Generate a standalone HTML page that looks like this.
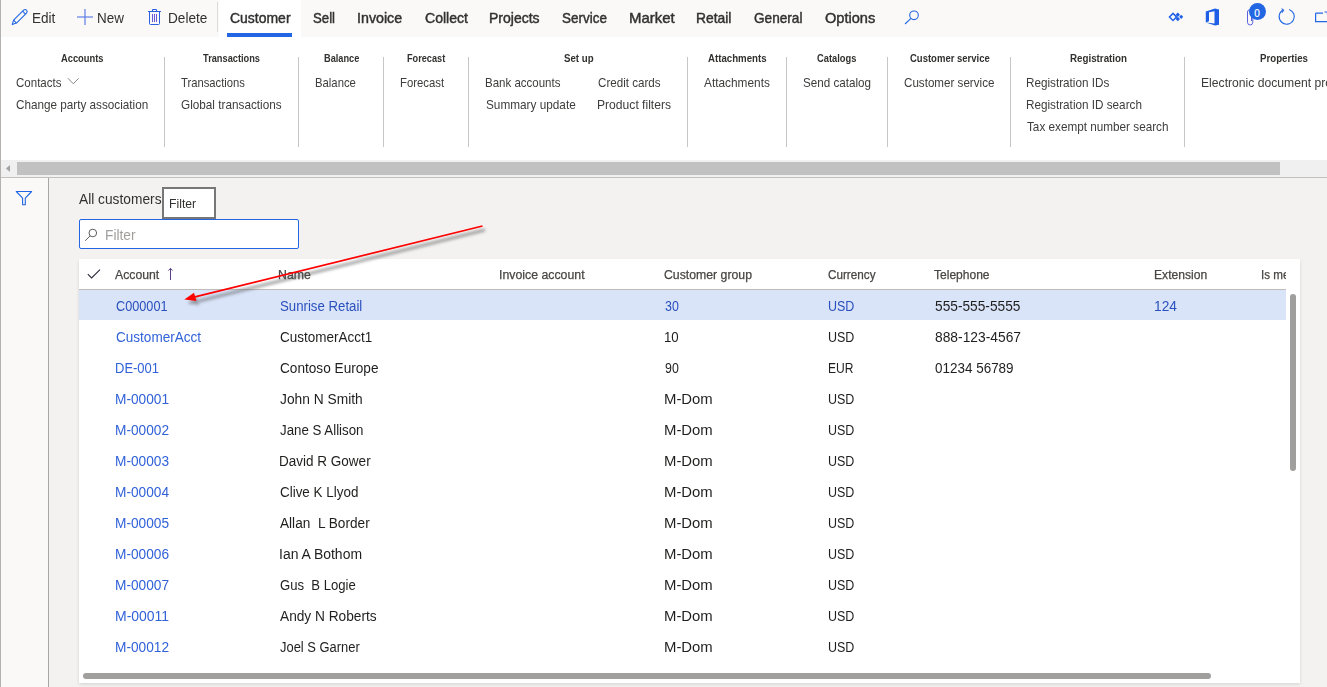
<!DOCTYPE html>
<html><head><meta charset="utf-8">
<style>
html,body{margin:0;padding:0}
body{width:1327px;height:687px;overflow:hidden;position:relative;background:#f3f2f1;font-family:"Liberation Sans",sans-serif}
.b{position:absolute}
.t{position:absolute;white-space:pre;line-height:20px;font-family:"Liberation Sans",sans-serif}
svg{position:absolute;overflow:visible}
</style></head><body>
<!-- toolbar -->
<div class="b" style="left:0;top:0;width:1327px;height:37px;background:#faf9f8"></div>
<div class="b" style="left:219px;top:0;width:82px;height:37px;background:#fff"></div>
<div class="b" style="left:227px;top:33px;width:65px;height:4px;background:#2266e3"></div>
<div class="b" style="left:217px;top:2px;width:1px;height:30px;background:#dedcda"></div>
<!-- ribbon -->
<div class="b" style="left:0;top:37px;width:1327px;height:123px;background:#fff"></div>
<div class="b" style="left:164px;top:57px;width:1px;height:90px;background:#c8c6c4"></div>
<div class="b" style="left:298px;top:57px;width:1px;height:90px;background:#c8c6c4"></div>
<div class="b" style="left:383px;top:57px;width:1px;height:90px;background:#c8c6c4"></div>
<div class="b" style="left:468px;top:57px;width:1px;height:90px;background:#c8c6c4"></div>
<div class="b" style="left:687px;top:57px;width:1px;height:90px;background:#c8c6c4"></div>
<div class="b" style="left:786px;top:57px;width:1px;height:90px;background:#c8c6c4"></div>
<div class="b" style="left:887px;top:57px;width:1px;height:90px;background:#c8c6c4"></div>
<div class="b" style="left:1010px;top:57px;width:1px;height:90px;background:#c8c6c4"></div>
<div class="b" style="left:1184px;top:57px;width:1px;height:90px;background:#c8c6c4"></div>
<!-- ribbon scrollbar -->
<div class="b" style="left:0;top:160px;width:1327px;height:17px;background:#f0f0f0"></div>
<div class="b" style="left:17px;top:162px;width:1263px;height:13px;background:#c1c1c1"></div>
<svg style="left:0;top:160px" width="17" height="17"><path d="M10 5 L10 12 L6 8.5 Z" fill="#a3a3a3"/></svg>
<div class="b" style="left:0;top:177px;width:1327px;height:1px;background:#c3bfbb"></div>
<!-- left nav -->
<div class="b" style="left:0;top:178px;width:48px;height:509px;background:#faf9f8"></div>
<div class="b" style="left:48px;top:178px;width:1px;height:509px;background:#a8a6a4"></div>
<div class="b" style="left:0;top:0;width:1px;height:687px;background:#b3b0ad"></div>
<!-- tooltip + filter -->
<div class="b" style="left:162px;top:187px;width:50px;height:28px;border:2px solid #777;background:#fff"></div>
<div class="b" style="left:79px;top:219px;width:218px;height:28px;border:1px solid #2266e3;border-radius:2px;background:#fff"></div>
<!-- grid -->
<div class="b" style="left:79px;top:259px;width:1221px;height:424px;background:#fff;box-shadow:0 1.6px 3.6px rgba(0,0,0,.12),0 .3px .9px rgba(0,0,0,.1)"></div>
<div class="b" style="left:79px;top:289px;width:1207px;height:1px;background:#bfbbb8"></div>
<div class="b" style="left:79px;top:290px;width:1207px;height:30px;background:#d9e4f9"></div>
<div class="b" style="left:1290px;top:294px;width:6px;height:177px;border-radius:3px;background:#a09f9e"></div>
<div class="b" style="left:83px;top:673px;width:1128px;height:6px;border-radius:3px;background:#a09f9e"></div>
<!-- icons -->
<!--ICONS-->
<!-- pencil -->
<svg style="left:11px;top:8px" width="18" height="18" viewBox="0 0 18 18"><g fill="none" stroke="#2266e3" stroke-width="1.1" stroke-linejoin="round"><path d="M1.2 16.6 L2.6 12.2 L12.6 2.2 Q14.1 0.8 15.5 2.2 Q16.9 3.7 15.5 5.1 L5.5 15.1 Z"/><path d="M2.6 12.2 L5.5 15.1"/><path d="M11.6 3.2 L14.5 6.1"/></g></svg>
<!-- plus -->
<svg style="left:77px;top:9px" width="16" height="16" viewBox="0 0 16 16"><g stroke="#5f7fe6" stroke-width="1.2"><path d="M8 0 V16"/><path d="M0 8 H16"/></g></svg>
<!-- trash -->
<svg style="left:147px;top:8px" width="16" height="18" viewBox="0 0 16 18"><g fill="none" stroke="#2a5fe0" stroke-width="1"><path d="M1 3.5 H14"/><path d="M5.5 3.5 V1.5 H9.5 V3.5"/><path d="M2.5 3.5 V15.5 Q2.5 16.5 3.5 16.5 H11.5 Q12.5 16.5 12.5 15.5 V3.5"/><path d="M5.5 6 V14 M7.5 6 V14 M9.5 6 V14" stroke="#6a5ad8"/></g></svg>
<!-- search tab -->
<svg style="left:904px;top:10px" width="16" height="15" viewBox="0 0 16 15"><g fill="none" stroke="#2266e3" stroke-width="1.1"><circle cx="10" cy="5.3" r="4.3"/><path d="M7 8.4 L1 14"/></g></svg>
<!-- power apps diamonds -->
<svg style="left:1168px;top:12px" width="16" height="10" viewBox="0 0 16 10"><g fill="#1f5fe6"><path d="M5 0.3 L9.6 4.9 L5 9.5 L0.4 4.9 Z M5 2.4 L2.5 4.9 L5 7.4 L7.5 4.9 Z" fill-rule="evenodd"/><path d="M9.8 0.6 L12 2.8 L9.8 5 L7.6 2.8 Z"/><path d="M13.2 2.7 L15.2 4.8 L13.2 6.9 L11.2 4.8 Z"/><path d="M9.8 4.8 L12 7 L9.8 9.2 L7.6 7 Z"/></g></svg>
<!-- office -->
<svg style="left:1205px;top:8px" width="15" height="18" viewBox="0 0 15 18"><path fill="#1f5fe6" d="M0.8 3.4 L10 0.6 L14 1.4 L14 16.8 L10 17.4 L0.8 14.6 L9.5 15.5 L9.5 3.3 L4 4.3 L4 13.2 L0.8 14.6 Z"/></svg>
<!-- paperclip -->
<svg style="left:1246px;top:9px" width="9" height="17" viewBox="0 0 9 17"><path fill="none" stroke="#5b62dc" stroke-width="1" d="M6.8 4 V13.2 Q6.8 16 4.2 16 Q1.5 16 1.5 13.2 V3 Q1.5 0.8 3.5 0.8 Q5.5 0.8 5.5 3 V12"/></svg>
<div class="b" style="left:1249px;top:3px;width:17px;height:17px;border-radius:50%;background:#2266e3"></div>
<span class="t" style="left:1254.3px;top:4px;font-size:10px;font-weight:normal;-webkit-text-stroke:0.2px #fff;color:#fff">0</span>
<!-- refresh -->
<svg style="left:1278px;top:8px" width="18" height="18" viewBox="0 0 18 18"><g fill="none" stroke="#2266e3" stroke-width="1.1"><path d="M11.2 1.4 A7.6 7.6 0 1 1 4.6 2.2"/><path d="M3.6 0.6 L5.6 2.1 L3.9 4.6"/></g></svg>
<!-- open in new -->
<svg style="left:1315px;top:11px" width="14" height="13" viewBox="0 0 14 13"><g fill="none" stroke="#2266e3" stroke-width="1.2"><path d="M0.6 2.2 H8 M0.6 2.2 V10.6 H14"/><path d="M9.5 1 L12.5 1 L12.5 4"/></g></svg>
<!-- nav filter -->
<svg style="left:15px;top:190px" width="18" height="16" viewBox="0 0 18 16"><path fill="none" stroke="#2266e3" stroke-width="1.1" stroke-linejoin="round" d="M1.3 1.5 H16.6 L10.3 8.2 V14.8 H7.6 V8.2 Z"/></svg>
<!-- filter input search -->
<svg style="left:84px;top:228px" width="14" height="14" viewBox="0 0 14 14"><g fill="none" stroke="#605e5c" stroke-width="1"><circle cx="8.8" cy="5" r="3.8"/><path d="M6.1 7.8 L1.2 12.8"/></g></svg>
<!-- header checkmark -->
<svg style="left:86px;top:268px" width="16" height="12" viewBox="0 0 16 12"><path fill="none" stroke="#2b2a3a" stroke-width="1.1" d="M1.8 6.2 L5.6 10 L14 1.6"/></svg>
<!-- sort arrow -->
<svg style="left:166px;top:267px" width="9" height="14" viewBox="0 0 9 14"><g fill="none" stroke="#5a3f8a" stroke-width="1"><path d="M4.5 1.2 V13"/><path d="M2.3 3.6 L4.5 1.4 L6.7 3.6"/></g></svg>
<!-- contacts chevron -->
<svg style="left:67px;top:77px" width="13" height="9" viewBox="0 0 13 9"><path fill="none" stroke="#8a8886" stroke-width="1" d="M1 1.3 L6.3 6.8 L11.6 1.3"/></svg>

<!--/ICONS-->
<span class="t" style="left:31.73px;top:8px;font-size:14px;font-weight:normal;color:#323130;transform:scaleX(0.9684);transform-origin:0 0;">Edit</span>
<span class="t" style="left:97.34px;top:8px;font-size:14px;font-weight:normal;color:#323130;transform:scaleX(0.9607);transform-origin:0 0;">New</span>
<span class="t" style="left:167.53px;top:8px;font-size:14px;font-weight:normal;color:#323130;transform:scaleX(0.9727);transform-origin:0 0;">Delete</span>
<span class="t" style="left:229.70px;top:8px;font-size:14.5px;font-weight:normal;color:#323130;transform:scaleX(0.9632);transform-origin:0 0;-webkit-text-stroke:0.45px currentColor;">Customer</span>
<span class="t" style="left:312.70px;top:8px;font-size:14.5px;font-weight:normal;color:#323130;transform:scaleX(0.9100);transform-origin:0 0;-webkit-text-stroke:0.45px currentColor;">Sell</span>
<span class="t" style="left:356.92px;top:8px;font-size:14.5px;font-weight:normal;color:#323130;transform:scaleX(0.9827);transform-origin:0 0;-webkit-text-stroke:0.45px currentColor;">Invoice</span>
<span class="t" style="left:424.50px;top:8px;font-size:14.5px;font-weight:normal;color:#323130;transform:scaleX(0.9686);transform-origin:0 0;-webkit-text-stroke:0.45px currentColor;">Collect</span>
<span class="t" style="left:489.43px;top:8px;font-size:14.5px;font-weight:normal;color:#323130;transform:scaleX(0.9662);transform-origin:0 0;-webkit-text-stroke:0.45px currentColor;">Projects</span>
<span class="t" style="left:562.40px;top:8px;font-size:14.5px;font-weight:normal;color:#323130;transform:scaleX(0.9278);transform-origin:0 0;-webkit-text-stroke:0.45px currentColor;">Service</span>
<span class="t" style="left:629.37px;top:8px;font-size:14.5px;font-weight:normal;color:#323130;transform:scaleX(1.0304);transform-origin:0 0;-webkit-text-stroke:0.45px currentColor;">Market</span>
<span class="t" style="left:696.25px;top:8px;font-size:14.5px;font-weight:normal;color:#323130;transform:scaleX(0.9540);transform-origin:0 0;-webkit-text-stroke:0.45px currentColor;">Retail</span>
<span class="t" style="left:754.30px;top:8px;font-size:14.5px;font-weight:normal;color:#323130;transform:scaleX(0.9384);transform-origin:0 0;-webkit-text-stroke:0.45px currentColor;">General</span>
<span class="t" style="left:825.00px;top:8px;font-size:14.5px;font-weight:normal;color:#323130;transform:scaleX(1.0056);transform-origin:0 0;-webkit-text-stroke:0.45px currentColor;">Options</span>
<span class="t" style="left:61.10px;top:49px;font-size:10px;font-weight:bold;color:#323130;transform:scaleX(0.9326);transform-origin:0 0;">Accounts</span>
<span class="t" style="left:203.40px;top:49px;font-size:10px;font-weight:bold;color:#323130;transform:scaleX(0.9239);transform-origin:0 0;">Transactions</span>
<span class="t" style="left:324.00px;top:49px;font-size:10px;font-weight:bold;color:#323130;transform:scaleX(0.9203);transform-origin:0 0;">Balance</span>
<span class="t" style="left:407.20px;top:49px;font-size:10px;font-weight:bold;color:#323130;transform:scaleX(0.9161);transform-origin:0 0;">Forecast</span>
<span class="t" style="left:563.80px;top:49px;font-size:10px;font-weight:bold;color:#323130;transform:scaleX(0.9689);transform-origin:0 0;">Set up</span>
<span class="t" style="left:708.00px;top:49px;font-size:10px;font-weight:bold;color:#323130;transform:scaleX(0.9671);transform-origin:0 0;">Attachments</span>
<span class="t" style="left:817.40px;top:49px;font-size:10px;font-weight:bold;color:#323130;transform:scaleX(0.9327);transform-origin:0 0;">Catalogs</span>
<span class="t" style="left:909.60px;top:49px;font-size:10px;font-weight:bold;color:#323130;transform:scaleX(0.9506);transform-origin:0 0;">Customer service</span>
<span class="t" style="left:1069.60px;top:49px;font-size:10px;font-weight:bold;color:#323130;transform:scaleX(0.9771);transform-origin:0 0;">Registration</span>
<span class="t" style="left:1260.00px;top:49px;font-size:10px;font-weight:bold;color:#323130;transform:scaleX(0.9699);transform-origin:0 0;">Properties</span>
<span class="t" style="left:16.20px;top:73px;font-size:13px;font-weight:normal;color:#3e3d3c;transform:scaleX(0.8861);transform-origin:0 0;">Contacts</span>
<span class="t" style="left:16.20px;top:95px;font-size:13px;font-weight:normal;color:#3e3d3c;transform:scaleX(0.9012);transform-origin:0 0;">Change party association</span>
<span class="t" style="left:181.20px;top:73px;font-size:13px;font-weight:normal;color:#3e3d3c;transform:scaleX(0.8652);transform-origin:0 0;">Transactions</span>
<span class="t" style="left:181.20px;top:95px;font-size:13px;font-weight:normal;color:#3e3d3c;transform:scaleX(0.9044);transform-origin:0 0;">Global transactions</span>
<span class="t" style="left:314.63px;top:73px;font-size:13px;font-weight:normal;color:#3e3d3c;transform:scaleX(0.8700);transform-origin:0 0;">Balance</span>
<span class="t" style="left:399.53px;top:73px;font-size:13px;font-weight:normal;color:#3e3d3c;transform:scaleX(0.8727);transform-origin:0 0;">Forecast</span>
<span class="t" style="left:484.62px;top:73px;font-size:13px;font-weight:normal;color:#3e3d3c;transform:scaleX(0.8847);transform-origin:0 0;">Bank accounts</span>
<span class="t" style="left:485.50px;top:95px;font-size:13px;font-weight:normal;color:#3e3d3c;transform:scaleX(0.9062);transform-origin:0 0;">Summary update</span>
<span class="t" style="left:597.60px;top:73px;font-size:13px;font-weight:normal;color:#3e3d3c;transform:scaleX(0.8926);transform-origin:0 0;">Credit cards</span>
<span class="t" style="left:596.67px;top:95px;font-size:13px;font-weight:normal;color:#3e3d3c;transform:scaleX(0.9320);transform-origin:0 0;">Product filters</span>
<span class="t" style="left:704.40px;top:73px;font-size:13px;font-weight:normal;color:#3e3d3c;transform:scaleX(0.9113);transform-origin:0 0;">Attachments</span>
<span class="t" style="left:803.20px;top:73px;font-size:13px;font-weight:normal;color:#3e3d3c;transform:scaleX(0.8961);transform-origin:0 0;">Send catalog</span>
<span class="t" style="left:904.30px;top:73px;font-size:13px;font-weight:normal;color:#3e3d3c;transform:scaleX(0.8939);transform-origin:0 0;">Customer service</span>
<span class="t" style="left:1026.30px;top:73px;font-size:13px;font-weight:normal;color:#3e3d3c;transform:scaleX(0.9002);transform-origin:0 0;">Registration IDs</span>
<span class="t" style="left:1026.30px;top:95px;font-size:13px;font-weight:normal;color:#3e3d3c;transform:scaleX(0.9012);transform-origin:0 0;">Registration ID search</span>
<span class="t" style="left:1027.00px;top:117px;font-size:13px;font-weight:normal;color:#3e3d3c;transform:scaleX(0.9025);transform-origin:0 0;">Tax exempt number search</span>
<span class="t" style="left:1201.07px;top:73px;font-size:13px;font-weight:normal;color:#3e3d3c;transform:scaleX(0.9350);transform-origin:0 0;">Electronic document properties</span>
<span class="t" style="left:79.40px;top:189px;font-size:14px;font-weight:normal;color:#323130;transform:scaleX(0.9819);transform-origin:0 0;">All customers</span>
<span class="t" style="left:169.22px;top:194px;font-size:12.5px;font-weight:normal;color:#323130;transform:scaleX(0.9769);transform-origin:0 0;">Filter</span>
<span class="t" style="left:104.62px;top:225px;font-size:14px;font-weight:normal;color:#a19f9d;transform:scaleX(0.9820);transform-origin:0 0;">Filter</span>
<span class="t" style="left:115.00px;top:265px;font-size:12.5px;font-weight:normal;color:#484644;transform:scaleX(0.9783);transform-origin:0 0;-webkit-text-stroke:0.25px currentColor;">Account</span>
<span class="t" style="left:278.42px;top:265px;font-size:12.5px;font-weight:normal;color:#484644;transform:scaleX(0.9848);transform-origin:0 0;-webkit-text-stroke:0.25px currentColor;">Name</span>
<span class="t" style="left:498.91px;top:265px;font-size:12.5px;font-weight:normal;color:#484644;transform:scaleX(0.9851);transform-origin:0 0;-webkit-text-stroke:0.25px currentColor;">Invoice account</span>
<span class="t" style="left:664.20px;top:265px;font-size:12.5px;font-weight:normal;color:#484644;transform:scaleX(0.9814);transform-origin:0 0;-webkit-text-stroke:0.25px currentColor;">Customer group</span>
<span class="t" style="left:828.00px;top:265px;font-size:12.5px;font-weight:normal;color:#484644;transform:scaleX(0.9367);transform-origin:0 0;-webkit-text-stroke:0.25px currentColor;">Currency</span>
<span class="t" style="left:934.40px;top:265px;font-size:12.5px;font-weight:normal;color:#484644;transform:scaleX(0.9630);transform-origin:0 0;-webkit-text-stroke:0.25px currentColor;">Telephone</span>
<span class="t" style="left:1154.03px;top:265px;font-size:12.5px;font-weight:normal;color:#484644;transform:scaleX(0.9695);transform-origin:0 0;-webkit-text-stroke:0.25px currentColor;">Extension</span>
<span class="t" style="left:1261.07px;top:265px;font-size:12.5px;font-weight:normal;color:#484644;transform:scaleX(0.9300);transform-origin:0 0;-webkit-text-stroke:0.25px currentColor;">Is me</span>
<span class="t" style="left:115.80px;top:296px;font-size:14px;font-weight:normal;color:#2a50bd;transform:scaleX(0.9064);transform-origin:0 0;">C000001</span>
<span class="t" style="left:279.80px;top:296px;font-size:14px;font-weight:normal;color:#2a50bd;transform:scaleX(0.9444);transform-origin:0 0;">Sunrise Retail</span>
<span class="t" style="left:664.80px;top:296px;font-size:14px;font-weight:normal;color:#2a50bd;transform:scaleX(0.8869);transform-origin:0 0;">30</span>
<span class="t" style="left:827.61px;top:296px;font-size:14px;font-weight:normal;color:#2a50bd;transform:scaleX(0.8928);transform-origin:0 0;">USD</span>
<span class="t" style="left:934.80px;top:296px;font-size:14px;font-weight:normal;color:#201f1e;transform:scaleX(0.9794);transform-origin:0 0;">555-555-5555</span>
<span class="t" style="left:1154.42px;top:296px;font-size:14px;font-weight:normal;color:#2a50bd;transform:scaleX(0.9835);transform-origin:0 0;">124</span>
<span class="t" style="left:115.80px;top:327px;font-size:14px;font-weight:normal;color:#3162d8;transform:scaleX(0.9680);transform-origin:0 0;">CustomerAcct</span>
<span class="t" style="left:279.80px;top:327px;font-size:14px;font-weight:normal;color:#201f1e;transform:scaleX(0.9634);transform-origin:0 0;">CustomerAcct1</span>
<span class="t" style="left:663.85px;top:327px;font-size:14px;font-weight:normal;color:#201f1e;transform:scaleX(0.9468);transform-origin:0 0;">10</span>
<span class="t" style="left:827.61px;top:327px;font-size:14px;font-weight:normal;color:#201f1e;transform:scaleX(0.8928);transform-origin:0 0;">USD</span>
<span class="t" style="left:934.80px;top:327px;font-size:14px;font-weight:normal;color:#201f1e;transform:scaleX(0.9863);transform-origin:0 0;">888-123-4567</span>
<span class="t" style="left:114.87px;top:358px;font-size:14px;font-weight:normal;color:#3162d8;transform:scaleX(0.9275);transform-origin:0 0;">DE-001</span>
<span class="t" style="left:279.80px;top:358px;font-size:14px;font-weight:normal;color:#201f1e;transform:scaleX(0.9734);transform-origin:0 0;">Contoso Europe</span>
<span class="t" style="left:664.80px;top:358px;font-size:14px;font-weight:normal;color:#201f1e;transform:scaleX(0.8869);transform-origin:0 0;">90</span>
<span class="t" style="left:827.64px;top:358px;font-size:14px;font-weight:normal;color:#201f1e;transform:scaleX(0.8612);transform-origin:0 0;">EUR</span>
<span class="t" style="left:934.80px;top:358px;font-size:14px;font-weight:normal;color:#201f1e;transform:scaleX(0.9614);transform-origin:0 0;">01234 56789</span>
<span class="t" style="left:114.82px;top:389px;font-size:14px;font-weight:normal;color:#3162d8;transform:scaleX(0.9785);transform-origin:0 0;">M-00001</span>
<span class="t" style="left:279.80px;top:389px;font-size:14px;font-weight:normal;color:#201f1e;transform:scaleX(0.9838);transform-origin:0 0;">John N Smith</span>
<span class="t" style="left:663.74px;top:389px;font-size:14px;font-weight:normal;color:#201f1e;transform:scaleX(1.0629);transform-origin:0 0;">M-Dom</span>
<span class="t" style="left:827.61px;top:389px;font-size:14px;font-weight:normal;color:#201f1e;transform:scaleX(0.8928);transform-origin:0 0;">USD</span>
<span class="t" style="left:114.82px;top:420px;font-size:14px;font-weight:normal;color:#3162d8;transform:scaleX(0.9785);transform-origin:0 0;">M-00002</span>
<span class="t" style="left:279.80px;top:420px;font-size:14px;font-weight:normal;color:#201f1e;transform:scaleX(0.9496);transform-origin:0 0;">Jane S Allison</span>
<span class="t" style="left:663.74px;top:420px;font-size:14px;font-weight:normal;color:#201f1e;transform:scaleX(1.0629);transform-origin:0 0;">M-Dom</span>
<span class="t" style="left:827.61px;top:420px;font-size:14px;font-weight:normal;color:#201f1e;transform:scaleX(0.8928);transform-origin:0 0;">USD</span>
<span class="t" style="left:114.82px;top:451px;font-size:14px;font-weight:normal;color:#3162d8;transform:scaleX(0.9785);transform-origin:0 0;">M-00003</span>
<span class="t" style="left:278.83px;top:451px;font-size:14px;font-weight:normal;color:#201f1e;transform:scaleX(0.9655);transform-origin:0 0;">David R Gower</span>
<span class="t" style="left:663.74px;top:451px;font-size:14px;font-weight:normal;color:#201f1e;transform:scaleX(1.0629);transform-origin:0 0;">M-Dom</span>
<span class="t" style="left:827.61px;top:451px;font-size:14px;font-weight:normal;color:#201f1e;transform:scaleX(0.8928);transform-origin:0 0;">USD</span>
<span class="t" style="left:114.82px;top:482px;font-size:14px;font-weight:normal;color:#3162d8;transform:scaleX(0.9785);transform-origin:0 0;">M-00004</span>
<span class="t" style="left:279.80px;top:482px;font-size:14px;font-weight:normal;color:#201f1e;transform:scaleX(0.9590);transform-origin:0 0;">Clive K Llyod</span>
<span class="t" style="left:663.74px;top:482px;font-size:14px;font-weight:normal;color:#201f1e;transform:scaleX(1.0629);transform-origin:0 0;">M-Dom</span>
<span class="t" style="left:827.61px;top:482px;font-size:14px;font-weight:normal;color:#201f1e;transform:scaleX(0.8928);transform-origin:0 0;">USD</span>
<span class="t" style="left:114.82px;top:513px;font-size:14px;font-weight:normal;color:#3162d8;transform:scaleX(0.9785);transform-origin:0 0;">M-00005</span>
<span class="t" style="left:279.80px;top:513px;font-size:14px;font-weight:normal;color:#201f1e;transform:scaleX(0.9737);transform-origin:0 0;">Allan  L Border</span>
<span class="t" style="left:663.74px;top:513px;font-size:14px;font-weight:normal;color:#201f1e;transform:scaleX(1.0629);transform-origin:0 0;">M-Dom</span>
<span class="t" style="left:827.61px;top:513px;font-size:14px;font-weight:normal;color:#201f1e;transform:scaleX(0.8928);transform-origin:0 0;">USD</span>
<span class="t" style="left:114.82px;top:544px;font-size:14px;font-weight:normal;color:#3162d8;transform:scaleX(0.9785);transform-origin:0 0;">M-00006</span>
<span class="t" style="left:278.80px;top:544px;font-size:14px;font-weight:normal;color:#201f1e;transform:scaleX(0.9968);transform-origin:0 0;">Ian A Bothom</span>
<span class="t" style="left:663.74px;top:544px;font-size:14px;font-weight:normal;color:#201f1e;transform:scaleX(1.0629);transform-origin:0 0;">M-Dom</span>
<span class="t" style="left:827.61px;top:544px;font-size:14px;font-weight:normal;color:#201f1e;transform:scaleX(0.8928);transform-origin:0 0;">USD</span>
<span class="t" style="left:114.82px;top:575px;font-size:14px;font-weight:normal;color:#3162d8;transform:scaleX(0.9785);transform-origin:0 0;">M-00007</span>
<span class="t" style="left:279.80px;top:575px;font-size:14px;font-weight:normal;color:#201f1e;transform:scaleX(0.9365);transform-origin:0 0;">Gus  B Logie</span>
<span class="t" style="left:663.74px;top:575px;font-size:14px;font-weight:normal;color:#201f1e;transform:scaleX(1.0629);transform-origin:0 0;">M-Dom</span>
<span class="t" style="left:827.61px;top:575px;font-size:14px;font-weight:normal;color:#201f1e;transform:scaleX(0.8928);transform-origin:0 0;">USD</span>
<span class="t" style="left:114.80px;top:606px;font-size:14px;font-weight:normal;color:#3162d8;transform:scaleX(0.9976);transform-origin:0 0;">M-00011</span>
<span class="t" style="left:279.80px;top:606px;font-size:14px;font-weight:normal;color:#201f1e;transform:scaleX(0.9785);transform-origin:0 0;">Andy N Roberts</span>
<span class="t" style="left:663.74px;top:606px;font-size:14px;font-weight:normal;color:#201f1e;transform:scaleX(1.0629);transform-origin:0 0;">M-Dom</span>
<span class="t" style="left:827.61px;top:606px;font-size:14px;font-weight:normal;color:#201f1e;transform:scaleX(0.8928);transform-origin:0 0;">USD</span>
<span class="t" style="left:114.82px;top:637px;font-size:14px;font-weight:normal;color:#3162d8;transform:scaleX(0.9785);transform-origin:0 0;">M-00012</span>
<span class="t" style="left:279.80px;top:637px;font-size:14px;font-weight:normal;color:#201f1e;transform:scaleX(0.9226);transform-origin:0 0;">Joel S Garner</span>
<span class="t" style="left:663.74px;top:637px;font-size:14px;font-weight:normal;color:#201f1e;transform:scaleX(1.0629);transform-origin:0 0;">M-Dom</span>
<span class="t" style="left:827.61px;top:637px;font-size:14px;font-weight:normal;color:#201f1e;transform:scaleX(0.8928);transform-origin:0 0;">USD</span>
<div class="b" style="left:1286px;top:261px;width:14px;height:27px;background:#fff"></div>
<!--ARROW-->
<!-- red arrow -->
<svg style="left:0;top:0" width="1327" height="687" viewBox="0 0 1327 687">
<defs><filter id="sh" x="-20%" y="-50%" width="140%" height="200%"><feGaussianBlur stdDeviation="1.8"/></filter></defs>
<g transform="translate(3,4)" opacity="0.5" filter="url(#sh)"><path d="M482 226 L196 297" stroke="#505050" stroke-width="3"/><path d="M184.3 299.4 L194 293 L196.5 301 Z" fill="#505050"/></g>
<path d="M482.5 226 L194 297.2" stroke="#ff0000" stroke-width="1.7"/>
<path d="M184.3 299.4 L194 292.8 L196.5 301 Z" fill="#ff0000"/>
</svg>

<!--/ARROW-->
</body></html>
